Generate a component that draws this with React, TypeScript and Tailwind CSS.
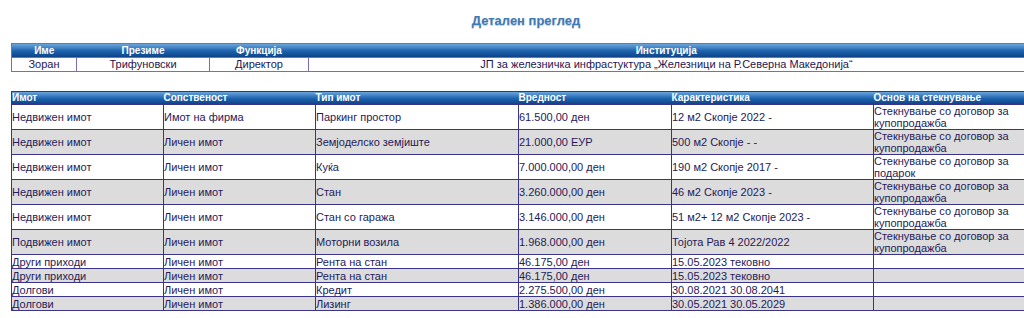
const personHead = ["Име", "Презиме", "Функција", "Институција"];
const personWidths = ["w-[65px]", "w-[133px]", "w-[99px]", ""];

const assetHead = ["Имот", "Сопственост", "Тип имот", "Вредност", "Карактеристика", "Основ на стекнување"];
const assetWidths = ["w-[152px]", "w-[152px]", "w-[203px]", "w-[153px]", "w-[202px]", ""];

const rows: string[][] = [
  ["Недвижен имот", "Имот на фирма", "Паркинг простор", "61.500,00 ден", "12 м2 Скопје 2022 -", "Стекнување со договор за купопродажба"],
  ["Недвижен имот", "Личен имот", "Земјоделско земјиште", "21.000,00 ЕУР", "500 м2 Скопје - -", "Стекнување со договор за купопродажба"],
  ["Недвижен имот", "Личен имот", "Куќа", "7.000.000,00 ден", "190 м2 Скопје 2017 -", "Стекнување со договор за подарок"],
  ["Недвижен имот", "Личен имот", "Стан", "3.260.000,00 ден", "46 м2 Скопје 2023 -", "Стекнување со договор за купопродажба"],
  ["Недвижен имот", "Личен имот", "Стан со гаража", "3.146.000,00 ден", "51 м2+ 12 м2 Скопје 2023 -", "Стекнување со договор за купопродажба"],
  ["Подвижен имот", "Личен имот", "Моторни возила", "1.968.000,00 ден", "Тојота Рав 4 2022/2022", "Стекнување со договор за купопродажба"],
  ["Други приходи", "Личен имот", "Рента на стан", "46.175,00 ден", "15.05.2023 тековно", ""],
  ["Други приходи", "Личен имот", "Рента на стан", "46.175,00 ден", "15.05.2023 тековно", ""],
  ["Долгови", "Личен имот", "Кредит", "2.275.500,00 ден", "30.08.2021 30.08.2041", ""],
  ["Долгови", "Личен имот", "Лизинг", "1.386.000,00 ден", "30.05.2021 30.05.2029", ""],
];

const headBg = "bg-gradient-to-b from-[#6aa5dc] via-[#1d63ad] to-[#0c3f82]";

export default function App() {
  return (
    <div className="w-[1024px] h-[318px] overflow-hidden bg-white font-['Liberation_Sans',Arial,sans-serif]">
      <h1 className="pt-[13px] pl-[28px] text-center text-[13px] font-bold leading-[16px] text-[#3f7ab3] [text-shadow:0_1px_1px_rgba(60,100,160,0.35)]">
        Детален преглед
      </h1>

      <table className="mt-[14px] ml-[11px] w-[1014px] table-fixed border-collapse border border-[#7a6db5] text-[11px] leading-[13px]">
        <thead>
          <tr className={headBg}>
            {personHead.map((h, i) => (
              <th key={h} className={`${personWidths[i]} h-[13px] p-0 text-center text-[10px] font-bold text-white`}>
                {h}
              </th>
            ))}
          </tr>
        </thead>
        <tbody>
          <tr className="text-[#1f1650]">
            {["Зоран", "Трифуновски", "Директор", "ЈП за железничка инфрастуктура „Железници на Р.Северна Македонија“"].map((c) => (
              <td key={c} className="h-[14px] border border-[#7a6db5] p-0 text-center">
                {c}
              </td>
            ))}
          </tr>
        </tbody>
      </table>

      <table className="mt-[19px] ml-[11px] w-[1014px] table-fixed border-collapse border border-[#3a3488] text-[11px] leading-[12px]">
        <thead>
          <tr className={headBg}>
            {assetHead.map((h, i) => (
              <th key={h} className={`${assetWidths[i]} h-[13px] p-0 text-left text-[10px] font-bold text-white`}>
                {h}
              </th>
            ))}
          </tr>
        </thead>
        <tbody>
          {rows.map((r, ri) => (
            <tr key={ri} className={`${ri % 2 ? "bg-[#dcdcdc]" : "bg-white"} text-[#251a5a]`}>
              {r.map((c, ci) => (
                <td key={ci} className={`border border-[#3a3488] p-0 align-middle ${r[5] ? "h-[25px]" : "h-[14px]"}`}>
                  {c}
                </td>
              ))}
            </tr>
          ))}
        </tbody>
      </table>
    </div>
  );
}
